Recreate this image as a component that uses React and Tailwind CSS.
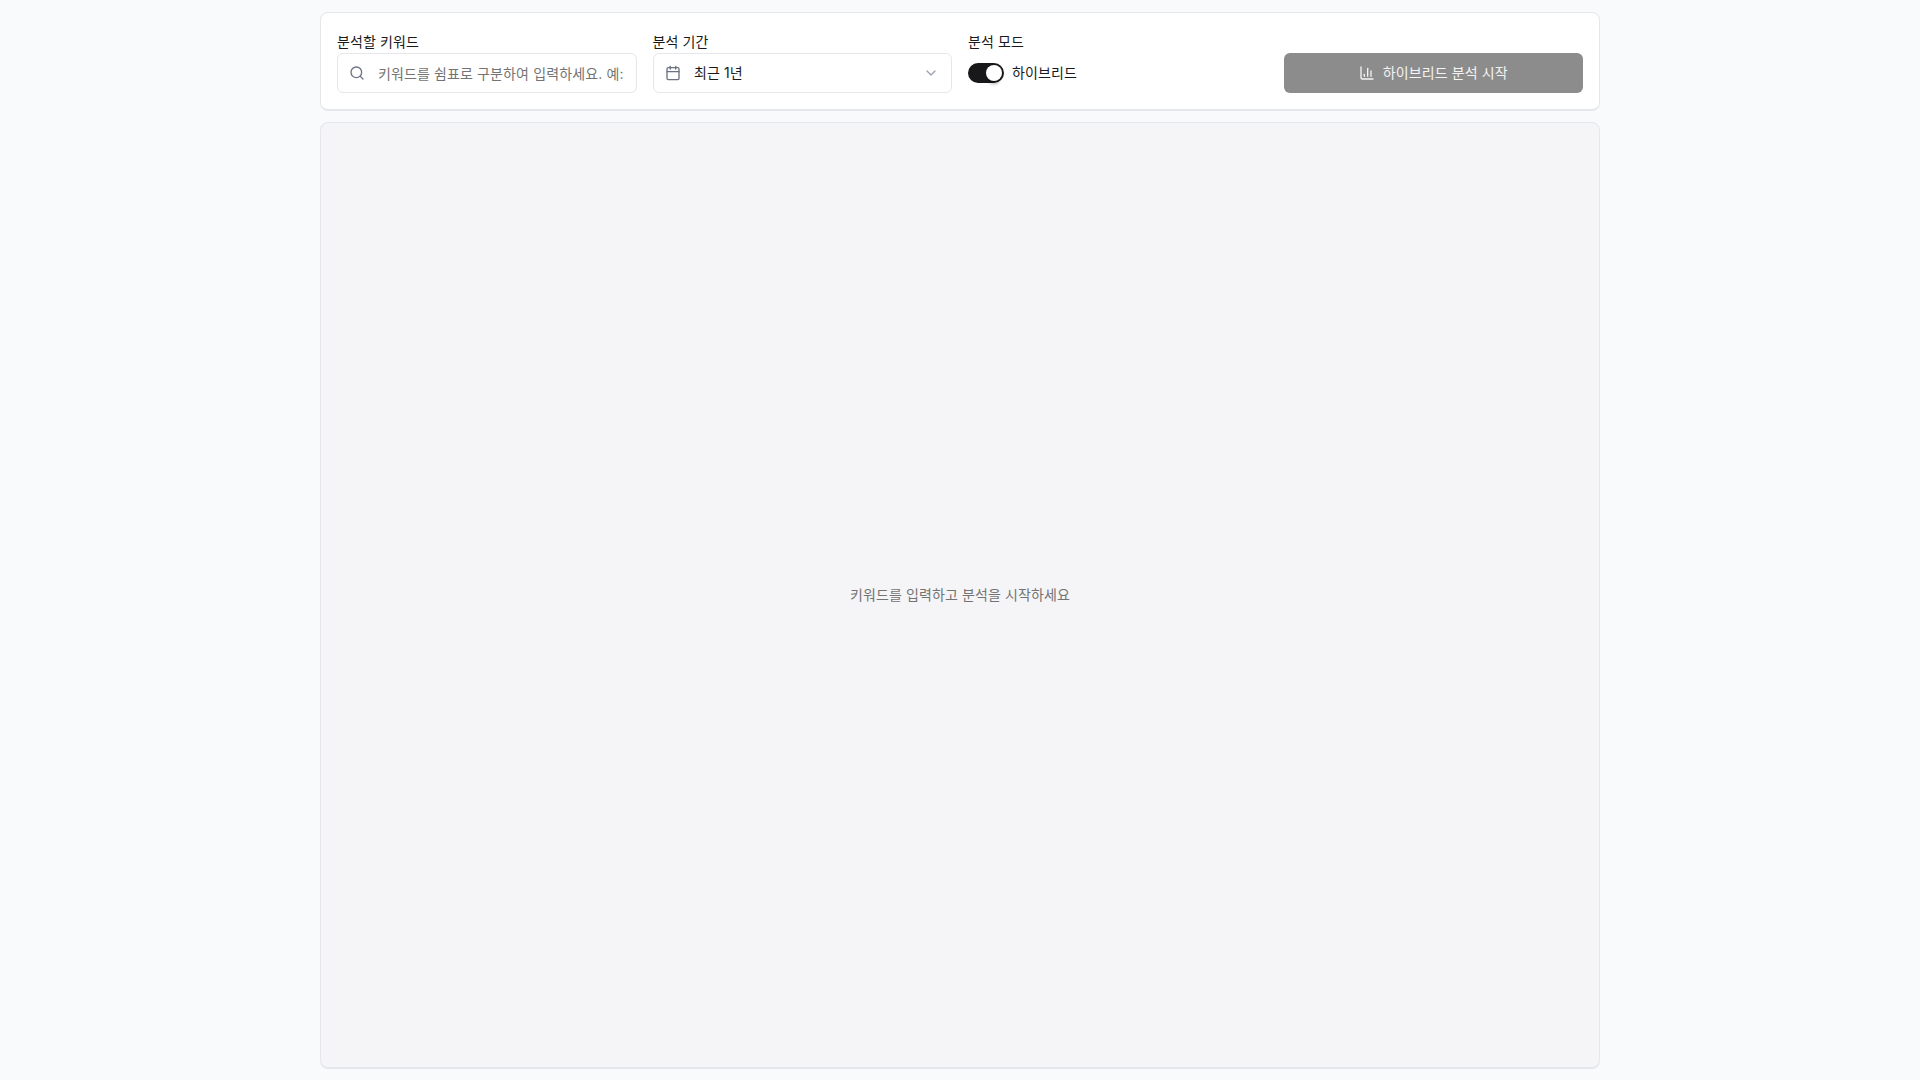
import React, { useState } from 'react';
import { Search, Calendar, ChevronDown, ChartColumn } from 'lucide-react';

const fontStack = 'font-["Inter","Noto_Sans_CJK_KR",sans-serif] tracking-[0.12px]';

const Field = ({ label, children }) => (
  <div className="flex flex-col">
    <label className="text-sm leading-5 mb-px text-[#1a1a1a]">{label}</label>
    {children}
  </div>
);

const App = () => {
  const [hybrid, setHybrid] = useState(true);

  return (
    <div className={`h-screen bg-[#f9fafc] pt-3 pb-[11px] overflow-hidden ${fontStack}`}>
      <div className="max-w-7xl h-full mx-auto flex flex-col gap-[11px]">
        <div className="bg-white border border-[#e5e7eb] border-b-2 rounded-lg px-4 pt-[19px] pb-4">
          <div className="grid grid-cols-4 gap-4 items-end">
            <Field label="분석할 키워드">
              <div className="relative h-10">
                <Search className="absolute left-3 top-1/2 -translate-y-1/2 w-4 h-4 text-[#6b7280]" />
                <input
                  type="text"
                  readOnly
                  placeholder="키워드를 쉼표로 구분하여 입력하세요. 예: 인공지능, 메타버스"
                  className="w-full h-full border border-[#e5e7eb] rounded-md pl-10 pr-3 text-sm text-[#1a1a1a] placeholder:text-[#737373] bg-white outline-none"
                />
              </div>
            </Field>
            <Field label="분석 기간">
              <div className="h-10 border border-[#e5e7eb] rounded-md bg-white flex items-center pl-[11.5px] pr-3 text-sm text-[#1a1a1a]">
                <Calendar className="w-4 h-4 text-[#6b7280] mr-[13px]" />
                <span className="flex-1">최근 1년</span>
                <ChevronDown className="w-4 h-4 text-[#9ca3af]" />
              </div>
            </Field>
            <Field label="분석 모드">
              <div className="h-10 flex items-center gap-2">
                <button
                  onClick={() => setHybrid(!hybrid)}
                  className="relative w-9 h-5 rounded-full bg-[#18181b] flex items-center"
                >
                  <span className="absolute left-[18px] w-4 h-4 rounded-full bg-white shadow-[0_6px_3px_-2px_rgba(0,0,0,0.2)]"></span>
                </button>
                <span className="text-sm text-[#1a1a1a]">하이브리드</span>
              </div>
            </Field>
            <button className="h-10 rounded-md bg-[#8c8c8c] text-white/90 text-sm flex items-center justify-center gap-2">
              <ChartColumn className="w-4 h-4" />
              하이브리드 분석 시작
            </button>
          </div>
        </div>
        <div className="flex-1 bg-[#f5f5f8] border border-[#e5e7eb] border-b-2 rounded-lg flex items-center justify-center">
          <p className="text-sm text-[#737373]">키워드를 입력하고 분석을 시작하세요</p>
        </div>
      </div>
    </div>
  );
};

export default App;
